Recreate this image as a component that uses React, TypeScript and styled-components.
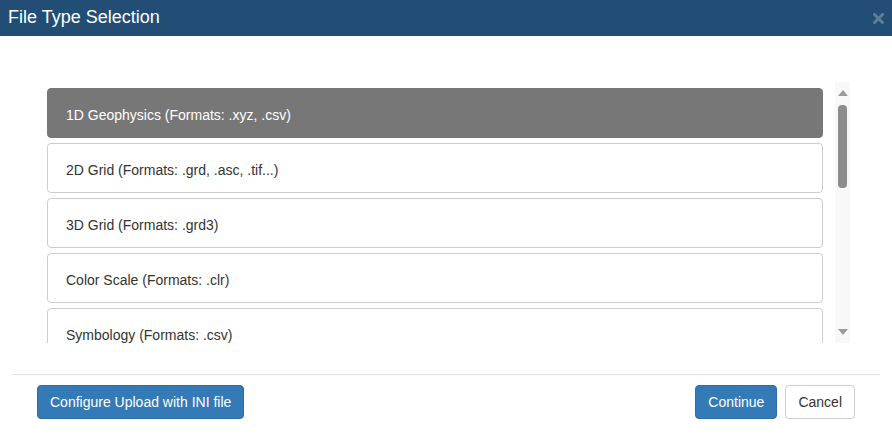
import React from 'react'
import styled, { createGlobalStyle } from 'styled-components'

const fileTypes = [
	'1D Geophysics (Formats: .xyz, .csv)',
	'2D Grid (Formats: .grd, .asc, .tif...)',
	'3D Grid (Formats: .grd3)',
	'Color Scale (Formats: .clr)',
	'Symbology (Formats: .csv)',
	'Vector (Formats: .shp, .kml)',
]

const GlobalStyle = createGlobalStyle`
	html, body {
		margin: 0;
		padding: 0;
		background: #fff;
	}
	body {
		font-family: 'Liberation Sans', Arial, sans-serif;
		font-size: 14px;
		color: #333;
	}
`

function App() {
	const selected = 0

	return (
		<>
			<GlobalStyle />
			<Modal>
				<Header>
					<Title>File Type Selection</Title>
					<Close>
						<svg width="11" height="11" viewBox="0 0 11 11">
							<path d="M1.5 1.5 L9.5 9.5 M9.5 1.5 L1.5 9.5" stroke="#5f7e9b" strokeWidth="3" strokeLinecap="round" />
						</svg>
					</Close>
				</Header>
				<Body>
					<ListArea>
						<ListScroll>
							{fileTypes.map((name, i) => (
								<Item key={name} active={i === selected}>
									{name}
								</Item>
							))}
						</ListScroll>
						<Scrollbar>
							<ArrowUp />
							<Thumb />
							<Spacer />
							<ArrowDown />
						</Scrollbar>
					</ListArea>
				</Body>
				<Divider />
				<Footer>
					<Button primary>Configure Upload with INI file</Button>
					<FooterRight>
						<Button primary>Continue</Button>
						<Button>Cancel</Button>
					</FooterRight>
				</Footer>
			</Modal>
		</>
	)
}

export default App

const Modal = styled.div`
	width: 892px;
	height: 438px;
	display: flex;
	flex-direction: column;
	background: #fff;
`
const Header = styled.div`
	height: 36px;
	background-color: #224e75;
	display: flex;
	align-items: center;
	justify-content: space-between;
	padding: 0 8px 0 8px;
	box-sizing: border-box;
`
const Title = styled.h4`
	margin: 0;
	font-size: 18px;
	font-weight: normal;
	color: #fff;
	line-height: 1.1;
`
const Close = styled.span`
	display: flex;
	margin-top: 1px;
`
const Body = styled.div`
	padding: 46px 42px 0 47px;
	height: 261px;
	box-sizing: content-box;
`
const ListArea = styled.div`
	display: flex;
	height: 261px;
`
const ListScroll = styled.div`
	flex: 1;
	overflow: hidden;
	padding: 6px 12px 0 0;
	display: flex;
	flex-direction: column;
	gap: 5px;
`
const Item = styled.div<{ active?: boolean }>`
	flex: 0 0 50px;
	box-sizing: border-box;
	display: flex;
	align-items: center;
	padding: 3px 18px 0;
	border: 1px solid ${(p) => (p.active ? '#777' : '#ccc')};
	border-radius: 4px;
	background-color: ${(p) => (p.active ? '#777' : '#fff')};
	color: ${(p) => (p.active ? '#fff' : '#333')};
	font-size: 14px;
`
const Scrollbar = styled.div`
	width: 15px;
	background-color: #f8f8f8;
	display: flex;
	flex-direction: column;
	align-items: center;
	padding: 8px 0 8px;
	box-sizing: border-box;
`
const ArrowUp = styled.div`
	width: 0;
	height: 0;
	border-left: 5px solid transparent;
	border-right: 5px solid transparent;
	border-bottom: 6px solid #9a9a9a;
`
const ArrowDown = styled.div`
	width: 0;
	height: 0;
	border-left: 5px solid transparent;
	border-right: 5px solid transparent;
	border-top: 6px solid #9a9a9a;
`
const Thumb = styled.div`
	width: 9px;
	height: 83px;
	margin-top: 9px;
	border-radius: 4px;
	background-color: #8c8c8c;
`
const Spacer = styled.div`
	flex: 1;
`
const Divider = styled.div`
	margin: 31px 12px 0;
	border-top: 1px solid #e5e5e5;
`
const Footer = styled.div`
	display: flex;
	justify-content: space-between;
	padding: 10px 37px 0;
`
const FooterRight = styled.div`
	display: flex;
	gap: 8px;
`
const Button = styled.button<{ primary?: boolean }>`
	font-family: 'Liberation Sans', Arial, sans-serif;
	font-size: 14px;
	line-height: 20px;
	height: 34px;
	padding: 6px 12px;
	border-radius: 4px;
	border: 1px solid ${(p) => (p.primary ? '#2e6da4' : '#ccc')};
	background-color: ${(p) => (p.primary ? '#337ab7' : '#fff')};
	color: ${(p) => (p.primary ? '#fff' : '#333')};
	box-sizing: border-box;
`
